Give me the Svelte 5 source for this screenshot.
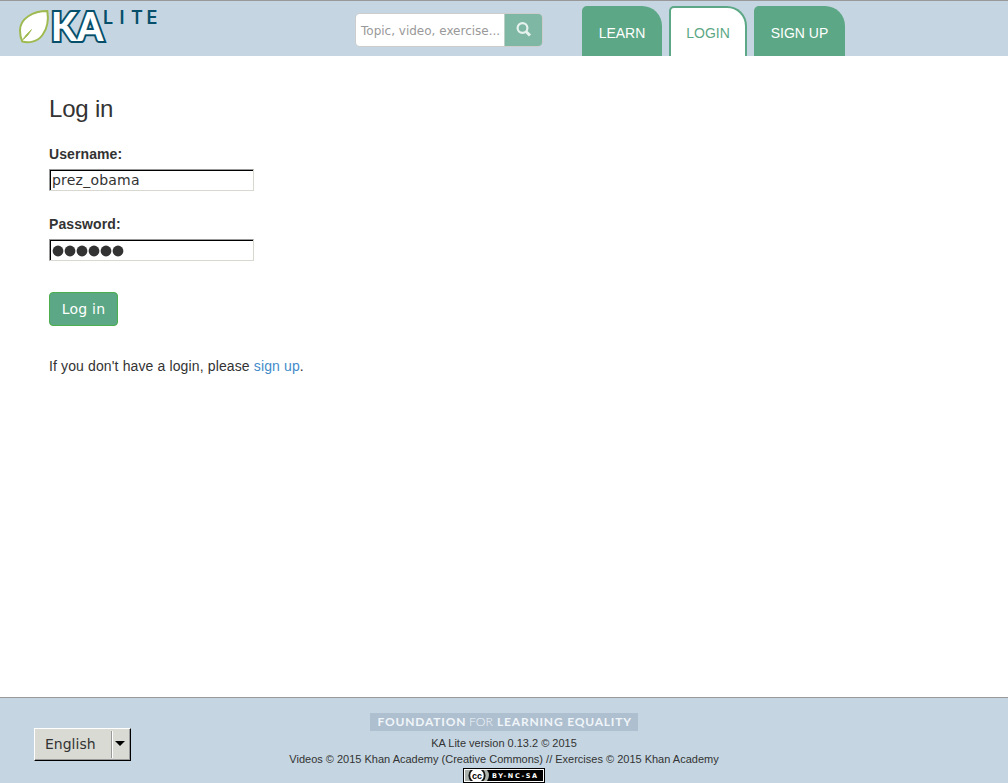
<script lang="ts">
  const tabs = [
    { label: 'LEARN', width: 80, active: false },
    { label: 'LOGIN', width: 78, active: true },
    { label: 'SIGN UP', width: 91, active: false },
  ];
  let username = $state('prez_obama');
  const mask = [0, 1, 2, 3, 4, 5];
</script>

<div class="page">
  <header>
    <a class="logo" href="#home" aria-label="KA Lite">
      <svg width="142" height="38" viewBox="0 0 142 38">
        <path d="M30.300 4C16 4 3 11.500 3 23.500C3 29 4 32 5.300 34.500C11 36 20 35.500 25.500 28C32 19 31.500 11 30.300 4Z" fill="#fff" stroke="#9fba50" stroke-width="2" />
        <path d="M4.500 34.500Q8 28 14.500 22.500Q11.500 28.500 7 32" fill="#9fba50" stroke="#9fba50" stroke-width=".8" />
        <text class="mark" x="34" y="34" textLength="52.500" lengthAdjust="spacingAndGlyphs">KA</text>
        <text class="lite" y="16.500" x="86 102.500 114 129.500">LITE</text>
      </svg>
    </a>
    <form class="search">
      <div class="query">Topic, video, exercise...</div>
      <button type="button" aria-label="Search">
        <svg width="16" height="16" viewBox="0 0 16 16" fill="none" stroke="#e6f2ed">
          <circle cx="6.500" cy="7" r="4.900" stroke-width="2.200" />
          <path d="M10 10.500L14 14.500" stroke-width="3" />
        </svg>
      </button>
    </form>
    <nav>
      {#each tabs as tab}
        <a href="#tab" class:active={tab.active} style="width: {tab.width}px">{tab.label}</a>
      {/each}
    </nav>
  </header>

  <main>
    <h3>Log in</h3>
    <label for="username">Username:</label>
    <input id="username" class="field" bind:value={username} />
    <div class="label">Password:</div>
    <div class="field">
      <svg width="76" height="18">
        {#each mask as i}
          <circle cx={6 + i * 12} cy="11" r="5.400" fill="#333" />
        {/each}
      </svg>
    </div>
    <button class="submit" type="button">Log in</button>
    <p>If you don't have a login, please <a href="#signup">sign up</a>.</p>
  </main>

  <footer>
    <div class="language"><span>English</span><i></i><b></b></div>
    <div class="credits">
      <svg class="fle" width="268" height="18">
        <rect width="268" height="18" fill="#aebfcf" />
        <g fill="#f0f5f9" font-family="Lato" font-size="12">
          <text x="7.500" y="13" font-weight="700" textLength="88" lengthAdjust="spacing">FOUNDATION</text>
          <text x="99" y="13" font-weight="300" textLength="24" lengthAdjust="spacingAndGlyphs">FOR</text>
          <text x="127" y="13" font-weight="700" textLength="134" lengthAdjust="spacing">LEARNING EQUALITY</text>
        </g>
      </svg>
      <div>KA Lite version 0.13.2 © 2015</div>
      <div>Videos © 2015 Khan Academy (Creative Commons) // Exercises © 2015 Khan Academy</div>
      <svg class="cc" width="82" height="15">
        <rect width="82" height="15" fill="#000" />
        <rect x="1" y="1" width="80" height="13" fill="#fff" />
        <rect x="2" y="2" width="78" height="11" fill="#000" />
        <path d="M2 2H24Q28 7 24 13H2Z" fill="#aab2ab" />
        <circle cx="14" cy="7.500" r="8" fill="#fff" />
        <circle cx="14" cy="7.500" r="7.700" fill="none" stroke="#111" stroke-width="1.800" />
        <path d="M0 .5H82M0 14.500H82" stroke="#000" />
        <path d="M1 1.500H81M1 13.500H81" stroke="#fff" />
        <text x="9" y="10.500" font-family="Liberation Sans" font-weight="700" font-size="9" textLength="10" lengthAdjust="spacingAndGlyphs">cc</text>
        <text x="29" y="10" fill="#fff" font-family="DejaVu Sans" font-weight="700" font-size="6.500" textLength="45" lengthAdjust="spacing">BY-NC-SA</text>
      </svg>
    </div>
  </footer>
</div>

<style>
  :global(body) { margin: 0; overflow: hidden; }
  * { box-sizing: border-box; }
  .page { height: 783px; display: flex; flex-direction: column; background: #fff; color: #333; font: 14px/20px "Liberation Sans", sans-serif; }
  a { color: #428bca; text-decoration: none; }
  svg { display: block; overflow: visible; }
  header { height: 56px; background: #c5d6e2; border-top: 1px solid #999; display: flex; align-items: flex-start; flex: none; }
  .logo { margin: 6px 0 0 17px; width: 142px; }
  .mark { font: 900 40px Lato, sans-serif; fill: #fff; stroke: #064f6b; stroke-width: 4.200px; paint-order: stroke; }
  .lite { font: 600 18px Inter, sans-serif; fill: #064f6b; }
  .search { display: flex; margin: 12px 0 0 196px; width: 188px; height: 34px; border: 1px solid #ccc; border-radius: 5px; overflow: hidden; }
  .query { width: 149px; background: #fff; border-right: 1px solid #b9cfc6; padding-left: 5px; font: 12px/34px "DejaVu Sans", sans-serif; color: #999; white-space: nowrap; flex: none; }
  .search button { flex: 1; background: #7fb7a5; border: 0; padding: 0 0 3px 0; display: flex; align-items: center; justify-content: center; }
  nav { display: flex; gap: 7px; margin: 5px 0 0 39px; }
  nav a { height: 50px; background: #5ca785; color: #fff; border-radius: 5px 20px 0 0; line-height: 54px; text-align: center; white-space: nowrap; }
  nav a.active { background: #fff; color: #5ca785; border: 2px solid #5ca785; border-bottom: 0; line-height: 50px; }
  main { flex: 1; padding: 40px 0 0 49px; display: flex; flex-direction: column; align-items: flex-start; }
  h3 { margin: 0; font-size: 24px; line-height: 26px; font-weight: 400; letter-spacing: -.2px; }
  label, .label { font-weight: 700; margin-top: 22px; height: 20px; letter-spacing: .1px; }
  .label { margin-top: 23px; }
  .field { width: 205px; height: 22px; margin: 5px 0 0; padding: 0 1px 0 2px; border: 1px solid; border-color: #999 #d8d8d0 #d8d8d0 #999; box-shadow: inset 1px 1px #000; border-radius: 0; outline: 0; background: #fff; color: #333; font: 14px/20px "DejaVu Sans", sans-serif; letter-spacing: .22px; }
  .submit { margin-top: 31px; width: 69px; height: 34px; padding: 0; background: #5ca785; border: 1px solid #4cae4c; border-radius: 4px; color: #fff; font: 14px/20px "DejaVu Sans", sans-serif; letter-spacing: .2px; }
  p { margin: 30px 0 0; letter-spacing: .13px; }
  footer { height: 86px; flex: none; background: #c5d6e2; border-top: 1px solid #999; position: relative; display: flex; justify-content: center; overflow: hidden; }
  .language { position: absolute; left: 34px; top: 30px; width: 97px; height: 33px; background: #dadad5; border: 1px solid; border-color: #fff #000 #000 #fff; box-shadow: inset -1px -1px #999; font: 14px/30px "DejaVu Sans", sans-serif; display: flex; align-items: center; padding-left: 10px; }
  .language span { width: 66px; margin-top: -2px; }
  .language i { width: 2px; height: 27px; border-left: 1px solid #999; border-right: 1px solid #fff; }
  .language b { margin: -2px 0 0 2px; border: 5px solid transparent; border-top-color: #000; border-bottom: 0; }
  .credits { padding-top: 15px; display: flex; flex-direction: column; align-items: center; font-size: 11px; line-height: 16px; white-space: nowrap; }
  .fle { margin-bottom: 4px; }
  .cc { margin-top: 1px; flex: none; overflow: hidden; }
</style>
